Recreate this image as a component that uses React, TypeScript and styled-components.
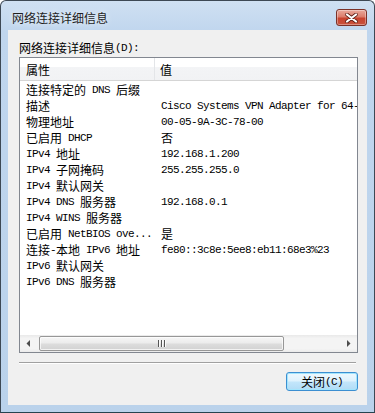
import React from 'react';
import styled, { createGlobalStyle } from 'styled-components';

const GlobalStyle = createGlobalStyle`
    html, body {
        margin: 0;
        padding: 0;
        background: #ffffff;
    }
    * {
        box-sizing: border-box;
    }
`;

const Window = styled.div`
    width: 375px;
    height: 413px;
    border: 1px solid #3d4854;
    border-bottom-color: #24434f;
    border-radius: 6px 6px 0 0;
    background: linear-gradient(180deg, #cfe0f2 0px, #c0d6ee 30px, #bad2eb 100%);
    display: flex;
    flex-direction: column;
    overflow: hidden;
    font-family: "Noto Sans CJK SC", sans-serif;
    color: #000;
`;

const TitleBar = styled.div`
    height: 29px;
    display: flex;
    align-items: flex-start;
    justify-content: space-between;
    padding: 0 7px 0 11px;
`;

const Title = styled.div`
    font-size: 12px;
    line-height: 16px;
    margin-top: 9px;
    color: #1e1e1e;
    text-shadow: 0 0 6px rgba(255, 255, 255, 0.9);
`;

const CloseButton = styled.div`
    width: 31px;
    height: 17px;
    margin-top: 8px;
    border: 1px solid #7b3128;
    border-radius: 3px;
    background: linear-gradient(180deg, #e9a99c 0%, #dc7d6c 45%, #c8432f 55%, #c9533d 100%);
    box-shadow: inset 0 0 0 1px rgba(255, 255, 255, 0.35);
    display: flex;
    align-items: center;
    justify-content: center;
`;

const Client = styled.div`
    margin: 0 7px 7px 7px;
    height: 375px;
    background: #f0f0f0;
    padding: 10px 9px 0 11px;
    display: flex;
    flex-direction: column;
`;

const Label = styled.div`
    height: 16px;
    line-height: 16px;
    font-size: 12px;
    display: flex;
    align-items: center;
`;

const ListBox = styled.div`
    margin-top: 1px;
    height: 296px;
    border: 1px solid #828790;
    background: #ffffff;
    display: flex;
    flex-direction: column;
    overflow: hidden;
`;

const Header = styled.div`
    height: 23px;
    flex: none;
    display: flex;
    border-bottom: 1px solid #d5d5d5;
    background: linear-gradient(180deg, #ffffff 0%, #ffffff 40%, #f3f4f6 41%, #f1f2f4 100%);
`;

const HeaderCell = styled.div<{ $w?: number }>`
    ${(p) => (p.$w ? `width: ${p.$w}px; flex: none;` : 'flex: 1;')}
    padding-left: ${(p) => (p.$w ? 6 : 5)}px;
    display: flex;
    align-items: center;
    font-size: 12px;
    border-right: ${(p) => (p.$w ? '1px solid #e3e5e8' : 'none')};
`;

const Body = styled.div`
    flex: 1;
    padding-top: 1px;
    overflow: hidden;
`;

const Row = styled.div`
    height: 16px;
    display: flex;
    align-items: center;
    white-space: nowrap;
`;

const Cell = styled.div<{ $w?: number }>`
    ${(p) => (p.$w ? `width: ${p.$w}px; flex: none;` : 'flex: 1;')}
    padding-left: ${(p) => (p.$w ? 6 : 6)}px;
    height: 16px;
    display: flex;
    align-items: center;
    overflow: hidden;
    white-space: nowrap;
`;

const Cjk = styled.span`
    font-family: "Noto Sans CJK SC", sans-serif;
    font-size: 12px;
    line-height: 16px;
`;

const Lat = styled.span`
    font-family: "Liberation Mono", monospace;
    font-size: 11px;
    letter-spacing: -0.6px;
    line-height: 16px;
    white-space: pre;
`;

const ScrollBar = styled.div`
    height: 17px;
    flex: none;
    display: flex;
    align-items: center;
    background: linear-gradient(180deg, #e9e9e9 0%, #f4f4f4 20%, #f4f4f4 80%, #ebebeb 100%);
`;

const Arrow = styled.div`
    width: 17px;
    height: 17px;
    flex: none;
    display: flex;
    align-items: center;
    justify-content: center;
`;

const Track = styled.div`
    flex: 1;
    height: 17px;
    display: flex;
    align-items: center;
    padding-left: 2px;
`;

const Thumb = styled.div`
    width: 245px;
    height: 15px;
    border: 1px solid #979797;
    border-radius: 2px;
    background: linear-gradient(180deg, #f6f6f6 0%, #ececec 45%, #dcdcdc 55%, #d2d2d2 100%);
    box-shadow: inset 0 0 0 1px rgba(255, 255, 255, 0.7);
    display: flex;
    align-items: center;
    justify-content: center;
    gap: 1px;
`;

const Grip = styled.div`
    width: 1px;
    height: 7px;
    background: #555;
    box-shadow: 1px 0 0 #fafafa;
    margin-right: 1px;
`;

const Separator = styled.div`
    margin-top: 9px;
    margin-right: 2px;
    height: 2px;
    border-top: 1px solid #a0a0a0;
    border-bottom: 1px solid #ffffff;
`;

const Footer = styled.div`
    margin-top: 8px;
    display: flex;
    justify-content: flex-end;
`;

const Button = styled.div`
    width: 72px;
    height: 19px;
    border: 1px solid #3c8fd1;
    border-radius: 3px;
    background: linear-gradient(180deg, #eef8fe 0%, #def2fd 48%, #c3e6fb 52%, #b1dcf6 100%);
    box-shadow: inset 0 0 0 1px #a3e5fd;
    display: flex;
    align-items: center;
    justify-content: center;
    font-size: 12px;
`;

const Txt = ({ children }: { children: string }) => {
    const parts = children.split(/([\u3000-\u9fff\uff00-\uffef]+)/).filter((s) => s.length > 0);
    return (
        <>
            {parts.map((s, i) =>
                /[\u3000-\u9fff\uff00-\uffef]/.test(s) ? <Cjk key={i}>{s}</Cjk> : <Lat key={i}>{s}</Lat>
            )}
        </>
    );
};

const rows: [string, string][] = [
    ['连接特定的 DNS 后缀', ''],
    ['描述', 'Cisco Systems VPN Adapter for 64-bit Windows'],
    ['物理地址', '00-05-9A-3C-78-00'],
    ['已启用 DHCP', '否'],
    ['IPv4 地址', '192.168.1.200'],
    ['IPv4 子网掩码', '255.255.255.0'],
    ['IPv4 默认网关', ''],
    ['IPv4 DNS 服务器', '192.168.0.1'],
    ['IPv4 WINS 服务器', ''],
    ['已启用 NetBIOS ove...', '是'],
    ['连接-本地 IPv6 地址', 'fe80::3c8e:5ee8:eb11:68e3%23'],
    ['IPv6 默认网关', ''],
    ['IPv6 DNS 服务器', ''],
];

const App = () => {
    return (
        <>
            <GlobalStyle />
            <Window>
                <TitleBar>
                    <Title>网络连接详细信息</Title>
                    <CloseButton>
                        <svg width="13" height="10" viewBox="0 0 13 10">
                            <path
                                d="M2 1.5 L11 8.5 M11 1.5 L2 8.5"
                                stroke="#5a1e16"
                                strokeWidth="3.6"
                                strokeLinecap="round"
                                fill="none"
                            />
                            <path
                                d="M2 1.5 L11 8.5 M11 1.5 L2 8.5"
                                stroke="#ffffff"
                                strokeWidth="2.2"
                                strokeLinecap="round"
                                fill="none"
                            />
                        </svg>
                    </CloseButton>
                </TitleBar>
                <Client>
                    <Label>
                        <Txt>网络连接详细信息(D):</Txt>
                    </Label>
                    <ListBox>
                        <Header>
                            <HeaderCell $w={135}>属性</HeaderCell>
                            <HeaderCell>值</HeaderCell>
                        </Header>
                        <Body>
                            {rows.map(([k, v]) => (
                                <Row key={k}>
                                    <Cell $w={135}>
                                        <Txt>{k}</Txt>
                                    </Cell>
                                    <Cell>
                                        <Txt>{v}</Txt>
                                    </Cell>
                                </Row>
                            ))}
                        </Body>
                        <ScrollBar>
                            <Arrow>
                                <svg width="5" height="7" viewBox="0 0 5 7">
                                    <path d="M4 0 L0.5 3.5 L4 7 Z" fill="#4d4d4d" />
                                </svg>
                            </Arrow>
                            <Track>
                                <Thumb>
                                    <Grip />
                                    <Grip />
                                    <Grip />
                                </Thumb>
                            </Track>
                            <Arrow>
                                <svg width="5" height="7" viewBox="0 0 5 7">
                                    <path d="M1 0 L4.5 3.5 L1 7 Z" fill="#4d4d4d" />
                                </svg>
                            </Arrow>
                        </ScrollBar>
                    </ListBox>
                    <Separator />
                    <Footer>
                        <Button>
                            <Txt>关闭(C)</Txt>
                        </Button>
                    </Footer>
                </Client>
            </Window>
        </>
    );
};

export default App;
